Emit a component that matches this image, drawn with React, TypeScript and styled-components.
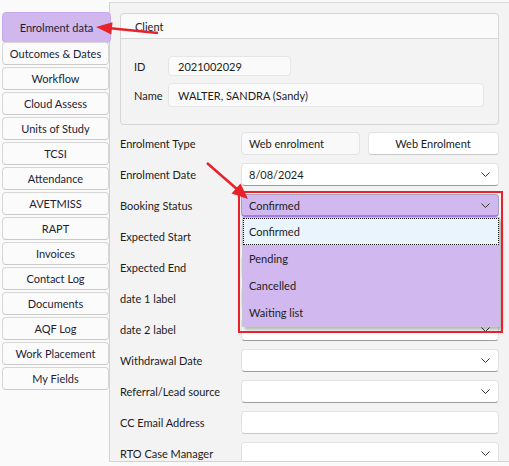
import styled, { createGlobalStyle } from 'styled-components';

const GlobalStyle = createGlobalStyle`
    html, body {
        margin: 0;
        padding: 0;
        background: #fafafa;
    }
    body {
        font-family: Lato, 'Noto Sans', sans-serif;
        font-size: 11px;
        color: #1c1c1c;
    }
`;

const Shell = styled.div`
    position: relative;
    display: flex;
    width: 509px;
    height: 466px;
    overflow: hidden;
    background: #fafafa;
`;

const TabColumn = styled.div`
    width: 107px;
    padding: 12px 0 0 2px;
    display: flex;
    flex-direction: column;
    flex-shrink: 0;
    position: relative;
    z-index: 1;
`;

const Tab = styled.div<{ $active?: boolean; $tight?: boolean }>`
    box-sizing: border-box;
    height: ${(p) => (p.$active ? '31px' : '23px')};
    margin-top: ${(p) => (p.$tight ? '-1px' : p.$active ? '0' : '2px')};
    margin-right: ${(p) => (p.$active ? '-2px' : '0')};
    display: flex;
    align-items: center;
    justify-content: center;
    border: 1px solid ${(p) => (p.$active ? '#c4a9ee' : '#d6d6d6')};
    border-bottom-color: ${(p) => (p.$active ? '#c4a9ee' : '#c9c9c9')};
    border-radius: 4px;
    background: ${(p) => (p.$active ? '#d0b8ef' : '#fbfbfb')};
    color: #1d1d35;
    white-space: nowrap;
`;

const Panel = styled.div`
    flex: 1;
    margin-top: 2px;
    height: 460px;
    box-sizing: border-box;
    border-left: 1px solid #d2d2d2;
    border-top: 1px solid #d9d9d9;
    border-bottom: 1px solid #d2d2d2;
    background: #f3f3f3;
    padding: 10px 10px 0 10px;
    overflow: hidden;
`;

const GroupBox = styled.div`
    border: 1px solid #d6d6d6;
    border-radius: 4px;
    background: #f3f3f3;
`;

const GroupHeader = styled.div`
    height: 24px;
    padding-left: 14px;
    display: flex;
    align-items: center;
    background: #fafafa;
    border-bottom: 1px solid #d6d6d6;
    border-radius: 4px 4px 0 0;
`;

const GroupBody = styled.div`
    padding: 17px 14px 17px 13px;
    display: grid;
    grid-template-columns: 34px 1fr;
    row-gap: 7px;
    align-items: center;
`;

const ClientValue = styled.div<{ $width?: number; $height: number }>`
    box-sizing: border-box;
    width: ${(p) => (p.$width ? `${p.$width}px` : 'auto')};
    height: ${(p) => p.$height}px;
    padding-left: 9px;
    display: flex;
    align-items: center;
    background: #fafafa;
    border: 1px solid #e6e6e6;
    border-radius: 4px;
`;

const Form = styled.div`
    margin-top: 7px;
    display: grid;
    grid-template-columns: 121px 1fr;
    grid-auto-rows: 23px;
    row-gap: 8px;
    align-items: center;
`;

const Label = styled.div`
    white-space: nowrap;
`;

const FieldPair = styled.div`
    display: flex;
    gap: 8px;
    height: 100%;
`;

type FieldKind = 'combo' | 'text' | 'readonly' | 'button' | 'picked';

const Field = styled.div<{ $kind: FieldKind; $width?: number }>`
    position: relative;
    box-sizing: border-box;
    height: 100%;
    ${(p) => (p.$width ? `width: ${p.$width}px;` : 'flex: 1;')}
    padding: 0 8px 0 7px;
    display: flex;
    align-items: center;
    justify-content: ${(p) => (p.$kind === 'button' ? 'center' : 'flex-start')};
    border-radius: 4px;
    border: 1px solid ${(p) => (p.$kind === 'picked' ? '#a9a0b8' : '#e3e3e3')};
    border-bottom-color: ${(p) =>
        p.$kind === 'picked' ? '#a47ce8' : p.$kind === 'combo' ? '#9c9c9c' : p.$kind === 'readonly' ? '#e3e3e3' : '#c8c8c8'};
    border-bottom-width: ${(p) => (p.$kind === 'picked' ? '2px' : '1px')};
    background: ${(p) =>
        p.$kind === 'picked' ? '#d1b9ef' : p.$kind === 'readonly' ? '#f9f9f9' : '#ffffff'};
    white-space: nowrap;
`;

const ChevronMark = styled.svg`
    flex-shrink: 0;
    margin-left: auto;
`;

const Chevron = () => (
    <ChevronMark width="9" height="5" viewBox="0 0 9 5">
        <polyline points="0.5,0.5 4.5,4.5 8.5,0.5" fill="none" stroke="#333" strokeWidth="1" />
    </ChevronMark>
);

const DropList = styled.div`
    position: absolute;
    top: calc(100% + 2px);
    left: 0;
    width: 258px;
    box-sizing: border-box;
    background: #d1b9ef;
    border: 1px solid #c9c2d4;
    box-shadow: 2px 3px 3px rgba(0, 0, 0, 0.28);
    z-index: 2;
`;

const DropItem = styled.div<{ $hover?: boolean }>`
    box-sizing: border-box;
    height: 27px;
    padding-left: 5px;
    display: flex;
    align-items: center;
    background: ${(p) => (p.$hover ? '#eaf4fd' : 'transparent')};
    border: 1px ${(p) => (p.$hover ? 'dotted #111' : 'solid transparent')};
`;

const Highlight = styled.div`
    position: absolute;
    left: -4px;
    top: -4px;
    width: 265px;
    height: 142px;
    box-sizing: border-box;
    border: 2px solid #e8212b;
    z-index: 3;
    pointer-events: none;
`;

const Marks = styled.svg`
    position: absolute;
    left: 0;
    top: 0;
    pointer-events: none;
    z-index: 4;
`;

const tabs = [
    'Enrolment data',
    'Outcomes & Dates',
    'Workflow',
    'Cloud Assess',
    'Units of Study',
    'TCSI',
    'Attendance',
    'AVETMISS',
    'RAPT',
    'Invoices',
    'Contact Log',
    'Documents',
    'AQF Log',
    'Work Placement',
    'My Fields',
];

const bookingOptions = ['Confirmed', 'Pending', 'Cancelled', 'Waiting list'];

const rows: { label: string; kind: FieldKind; value?: string }[] = [
    { label: 'Expected Start', kind: 'combo' },
    { label: 'Expected End', kind: 'combo' },
    { label: 'date 1 label', kind: 'combo' },
    { label: 'date 2 label', kind: 'combo' },
    { label: 'Withdrawal Date', kind: 'combo' },
    { label: 'Referral/Lead source', kind: 'combo' },
    { label: 'CC Email Address', kind: 'text' },
    { label: 'RTO Case Manager', kind: 'combo' },
];

export default function App() {
    return (
        <Shell>
            <GlobalStyle />
            <TabColumn>
                {tabs.map((t, i) => (
                    <Tab key={t} $active={i === 0} $tight={i === 1}>
                        {t}
                    </Tab>
                ))}
            </TabColumn>
            <Panel>
                <GroupBox>
                    <GroupHeader>Client</GroupHeader>
                    <GroupBody>
                        <Label>ID</Label>
                        <ClientValue $width={123} $height={20}>
                            2021002029
                        </ClientValue>
                        <Label>Name</Label>
                        <ClientValue $height={24}>WALTER, SANDRA (Sandy)</ClientValue>
                    </GroupBody>
                </GroupBox>
                <Form>
                    <Label>Enrolment Type</Label>
                    <FieldPair>
                        <Field $kind="readonly" $width={119}>
                            Web enrolment
                        </Field>
                        <Field $kind="button">Web Enrolment</Field>
                    </FieldPair>
                    <Label>Enrolment Date</Label>
                    <Field $kind="combo">
                        8/08/2024
                        <Chevron />
                    </Field>
                    <Label>Booking Status</Label>
                    <Field $kind="picked">
                        Confirmed
                        <Chevron />
                        <DropList>
                            {bookingOptions.map((o, i) => (
                                <DropItem key={o} $hover={i === 0}>
                                    {o}
                                </DropItem>
                            ))}
                        </DropList>
                        <Highlight />
                    </Field>
                    {rows.flatMap((r) => [
                        <Label key={r.label}>{r.label}</Label>,
                        <Field key={r.label + '-f'} $kind={r.kind}>
                            {r.value}
                            {r.kind === 'combo' && <Chevron />}
                        </Field>,
                    ])}
                </Form>
            </Panel>
            <Marks width="509" height="466" viewBox="0 0 509 466">
                <line x1="158" y1="33" x2="108" y2="28" stroke="#e8212b" strokeWidth="2.5" />
                <polygon points="96,27 112.5,22.3 111.3,34.6" fill="#e8212b" />
                <line x1="207" y1="163" x2="238" y2="190" stroke="#e8212b" strokeWidth="2.5" />
                <polygon points="248,199 231.5,193.6 240.5,183.4" fill="#e8212b" />
            </Marks>
        </Shell>
    );
}
